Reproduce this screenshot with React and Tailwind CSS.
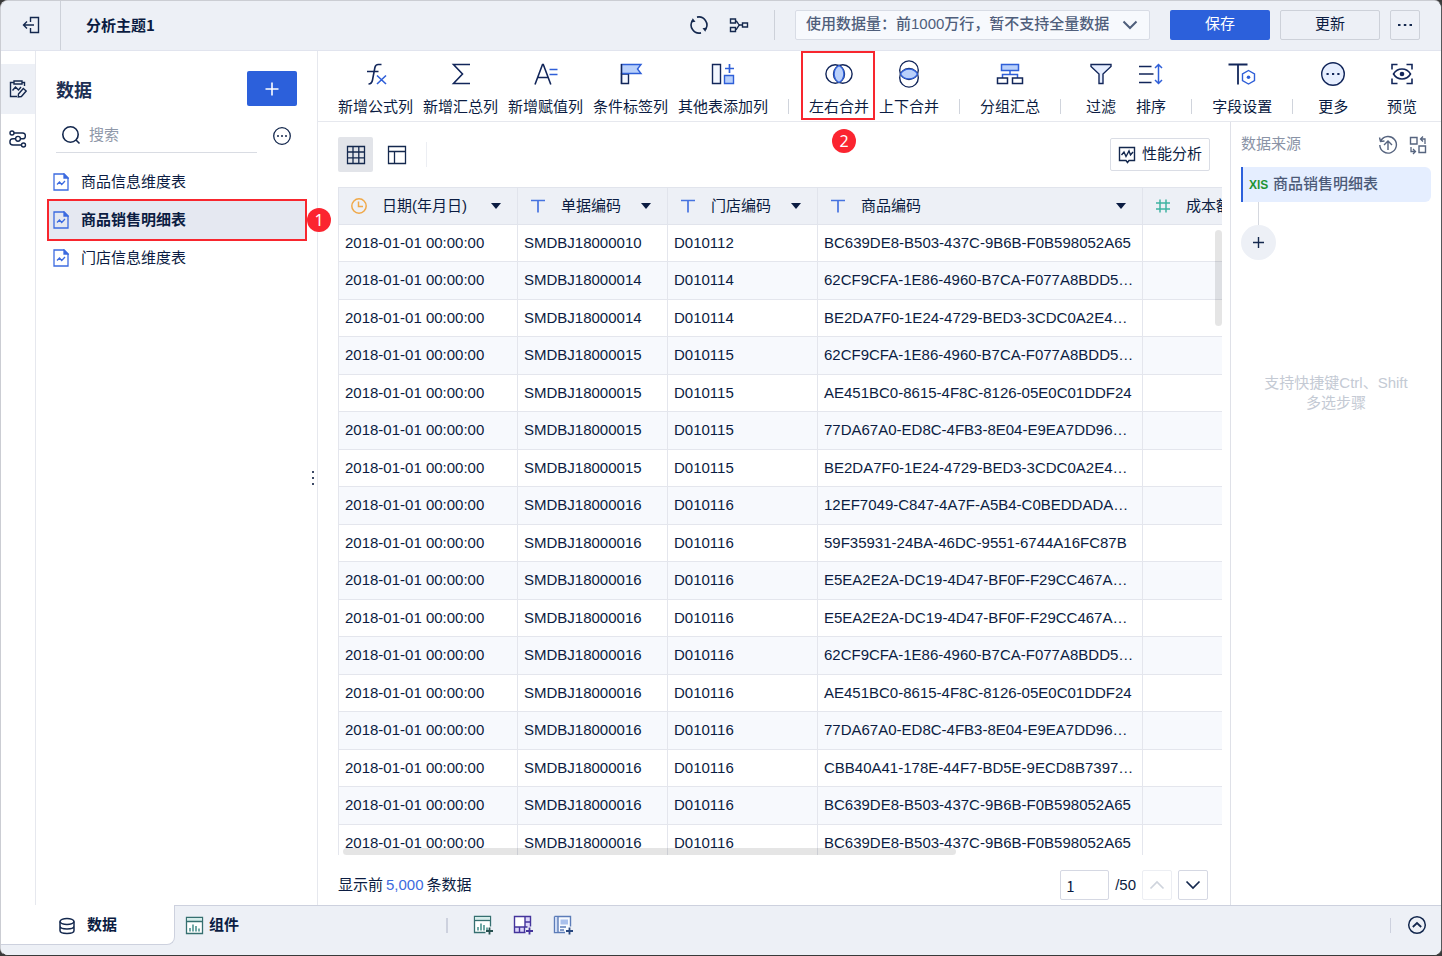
import React from "react";

const NAVY = "#12265a";
const BLUE = "#2f5fd8";
const INK = "#14284e";

function Svg({ w, h, children, className = "", stroke = INK, sw = 1.3 }) {
  return (
    <svg
      width={w}
      height={h}
      viewBox={`0 0 ${w} ${h}`}
      fill="none"
      stroke={stroke}
      strokeWidth={sw}
      className={`shrink-0 ${className}`}
      aria-hidden="true"
    >
      {children}
    </svg>
  );
}

const ExitIcon = () => (
  <Svg w={18} h={18} sw={1.4}>
    <path d="M8.500 6V1.500h8v15h-8V12M1.500 9H12M5 5.500L1.500 9 5 12.500" />
  </Svg>
);

const EditBoardIcon = () => (
  <Svg w={20} h={20} sw={1.4}>
    <path d="M16.500 7V3.500H14M6 3.500H2.500v14H9M6 2h8v3H6zM4.500 11.500l3-3.500 3 3 2.500-3" />
    <path d="M10.500 15l4.800-5.500 2.900 2.500-4.800 5.500-3.200.5z" />
  </Svg>
);

const FlowIcon = () => (
  <Svg w={20} h={20} sw={1.4}>
    <circle cx="4" cy="4" r="2" />
    <circle cx="10" cy="9.800" r="2.400" />
    <circle cx="15.500" cy="16" r="2" />
    <path d="M6 4h8.500a2.900 2.900 0 0 1 0 5.800H12.400M7.600 9.800H5a3.100 3.100 0 0 0 0 6.200h8.500" />
  </Svg>
);

const SearchIcon = () => (
  <Svg w={20} h={20} sw={1.6}>
    <circle cx="9.500" cy="9.500" r="7.700" />
    <path d="M15 15l3.500 3.500" />
  </Svg>
);

const DotsCircleIcon = () => (
  <Svg w={20} h={20} sw={1.3}>
    <circle cx="10" cy="10" r="8.300" />
    <path d="M5 10h2M9 10h2M13 10h2" strokeWidth="1.600" />
  </Svg>
);

const SheetIcon = () => (
  <Svg w={16} h={18} stroke="#3d6be0" sw={1.3}>
    <path d="M1 1h10l4 4v12H1z" />
    <path d="M11 1v4h4z" fill="#3d6be0" />
    <path d="M4 11.500l2.500-2.500 2.200 2.500 3.300-3.500" />
  </Svg>
);

const RefreshIcon = () => (
  <Svg w={20} h={20} sw={1.6}>
    <path d="M8 2.100A8.100 8.100 0 0 1 16.500 14.500M12 17.900A8.100 8.100 0 0 1 3.500 5.500" />
    <path d="M18 12.500l-4.500.8 2.800 3.500zM2 7.500l4.500-.8-2.800-3.500z" fill={INK} stroke="none" />
  </Svg>
);

const NodesIcon = () => (
  <Svg w={20} h={16} sw={1.4}>
    <path d="M1.500 2h5v4h-5zM1.500 10.500h5v4h-5zM13.500 6h5v4h-5z" />
    <path d="M6.500 4C9 4 8.500 8 11 8c-2.500 0-2 4.500-4.500 4.500M10 8h3.500" />
  </Svg>
);

const FxIcon = () => (
  <Svg w={28} h={28} stroke={NAVY} sw={1.6}>
    <path d="M19.500 4.500h-3.300c-2.200 0-2.900 1.200-3.300 3L10.500 20c-.5 2.700-1.400 4-4 4M5 11.500h11.500" />
    <path d="M15 15.500l9 8.500M24 15.500l-9 8.500" stroke={BLUE} />
  </Svg>
);

const SigmaIcon = () => (
  <Svg w={28} h={28} stroke={NAVY} sw={1.6}>
    <path d="M23 4.500H6.500l9 9.500-9 9.500H23" />
  </Svg>
);

const AssignIcon = () => (
  <Svg w={28} h={28} stroke={NAVY} sw={1.6}>
    <path d="M3 24.500l7.500-20h.8l7.500 20M5.500 17.500h11" />
    <path d="M17.500 9.500h8M17.500 14.500h8" stroke={BLUE} />
  </Svg>
);

const FlagIcon = () => (
  <Svg w={28} h={28} stroke={NAVY} sw={1.4}>
    <path d="M4.500 14h7v9.500h-7z" fill="#f3f7ff" />
    <path d="M4.500 4.500H24l-3.500 4.500 3.500 4.500H4.500z" fill="#b9d0fb" stroke={BLUE} />
    <path d="M4.500 4v20" />
  </Svg>
);

const AddColumnIcon = () => (
  <Svg w={28} h={28} stroke={NAVY} sw={1.4}>
    <path d="M3.500 4.500h8v19h-8z" fill="#f3f7ff" />
    <path d="M15.500 15.500h9v8h-9z" fill="#b9d0fb" stroke={BLUE} />
    <path d="M20.500 4v9M16 8.500h9" stroke={BLUE} strokeWidth="1.700" />
  </Svg>
);

const JoinIcon = () => (
  <Svg w={28} h={28} stroke={NAVY} sw={1.4}>
    <circle cx="10.200" cy="14" r="9.300" />
    <circle cx="17.800" cy="14" r="9.300" />
    <path d="M14 5.500a9.800 9.800 0 0 1 0 17a9.800 9.800 0 0 1 0-17z" fill="#b9d0fb" stroke={BLUE} />
  </Svg>
);

const UnionIcon = () => (
  <Svg w={28} h={28} stroke={NAVY} sw={1.4}>
    <circle cx="14" cy="10.200" r="9.300" />
    <circle cx="14" cy="17.800" r="9.300" />
    <path d="M5.500 14a9.800 9.800 0 0 1 17 0a9.800 9.800 0 0 1-17 0z" fill="#b9d0fb" stroke={BLUE} />
  </Svg>
);

const GroupIcon = () => (
  <Svg w={28} h={28} stroke={NAVY} sw={1.5}>
    <path d="M14 11v3.500M6.500 18v-3.500h15V18" stroke={BLUE} />
    <path d="M5.500 4.500h17v6h-17z" fill="#b9d0fb" stroke={BLUE} />
    <path d="M1.500 18h10v5.500h-10zM16.500 18h10v5.500h-10z" />
  </Svg>
);

const FilterIcon = () => (
  <Svg w={28} h={28} stroke={NAVY} sw={1.4}>
    <path d="M4 4.500h20v2L16 14v9.500h-4V14L4 6.500z" fill="#e6eeff" />
  </Svg>
);

const SortIcon = () => (
  <Svg w={28} h={28} stroke={NAVY} sw={1.7}>
    <path d="M2 6.500h12.500M2 14h14.500M2 22.500h12.500" />
    <path d="M21.500 4.500v19M18 8l3.500-3.500L25 8M18 20l3.500 3.500L25 20" stroke={BLUE} strokeWidth="1.500" />
  </Svg>
);

const FieldIcon = () => (
  <Svg w={28} h={28} stroke={NAVY} sw={1.8}>
    <path d="M.5 4.500h19M10 4.500v20" />
    <path d="M20.500 10.500l6 3.500v6.500l-6 3.500-6-3.500V14z" stroke={BLUE} fill="#fff" strokeWidth="1.400" />
    <circle cx="20.500" cy="17.200" r="1.800" fill={BLUE} stroke="none" />
  </Svg>
);

const MoreIcon = () => (
  <Svg w={28} h={28} stroke={NAVY} sw={1.4}>
    <circle cx="14" cy="14" r="11.300" fill="#e6eeff" />
    <path d="M7.500 14h2.200M13 14h2.200M18.300 14h2.200" strokeWidth="2" />
  </Svg>
);

const PreviewIcon = () => (
  <Svg w={28} h={28} stroke={NAVY} sw={1.6}>
    <path d="M4 9.500v-5h5.500M18.500 4.500H24v5M24 18.500v5h-5.500M9.500 23.500H4v-5" />
    <path d="M5.500 14c4-6.600 13-6.600 17 0c-4 6.600-13 6.600-17 0z" />
    <circle cx="14" cy="14" r="2.300" fill={NAVY} stroke="none" />
  </Svg>
);

const GridIcon = () => (
  <Svg w={20} h={20} sw={1.3}>
    <path d="M1.500 1.500h17v17h-17zM1.500 7h17M1.500 12.800h17M7 1.500v17M12.800 1.500v17" />
  </Svg>
);

const LayoutIcon = () => (
  <Svg w={20} h={20} sw={1.3}>
    <path d="M1.500 1.500h17v17h-17zM1.500 6.500h17M7.500 6.500v12" />
  </Svg>
);

const PerfIcon = () => (
  <Svg w={18} h={18} sw={1.4}>
    <path d="M8 14.500H1.500v-13h15v13H11l-1.500 2zM3.500 9L6 6l2 4.500L11 5l1.500 4L15 6" />
  </Svg>
);

const ClockIcon = () => (
  <Svg w={16} h={16} stroke="#f0a94a" sw={1.5}>
    <circle cx="8" cy="8" r="7.200" />
    <path d="M7.500 3.500v5H12" />
  </Svg>
);

const TextTypeIcon = () => (
  <Svg w={16} h={16} stroke="#4673e0" sw={1.7}>
    <path d="M1 2.500h14M8 2.500v12" />
  </Svg>
);

const HashIcon = () => (
  <Svg w={16} h={16} stroke="#3fb3a2" sw={1.5}>
    <path d="M1 5h14M1 11h14M5 1.500v13M11 1.500v13" />
  </Svg>
);

const RestoreIcon = () => (
  <Svg w={20} h={20} stroke="#56647f" sw={1.4}>
    <path d="M3 5.500a8.300 8.300 0 1 1-1.200 4.500M1.500 2.500l1 4 4-.5M10 15V6M6 10l4-4 4 4" />
  </Svg>
);

const SwapIcon = () => (
  <Svg w={20} h={20} stroke="#56647f" sw={1.4}>
    <path d="M2.500 2.500h6.500v6.500H2.500zM11 11h6.500v6.500H11z" />
    <path d="M17 9V4h-4.500M15 1.500L12.500 4 15 6.500M3 12v4.500h4.500M5 14l2.500 2.500L5 19" strokeWidth="1.300" />
  </Svg>
);

const DatabaseIcon = () => (
  <Svg w={16} h={18} sw={1.5}>
    <ellipse cx="8" cy="4.500" rx="7" ry="3" />
    <path d="M1 4.500v9c0 1.700 3 3 7 3s7-1.300 7-3v-9M1 9c0 1.700 3 3 7 3s7-1.300 7-3" />
  </Svg>
);

const ChartBoxIcon = ({ plus = false }) => (
  <Svg w={20} h={20} stroke="#356f70" sw={1.3}>
    <path d={plus ? "M12.500 17.500h-11v-16h16v10" : "M1.500 1.500h16v16h-16z"} fill="#fff" />
    <path d="M2 2h15v3H2z" fill="#d5ecea" stroke="none" />
    <path d="M1.500 5.500h16" />
    <path d="M5 15.500v-3.500M8 15.500V8.500M11 15.500v-5.500M14 15.500v-3" strokeWidth="1.600" stroke="#4e9390" />
    {plus && <path d="M16.500 12.500v7M13 16h7" strokeWidth="1.800" stroke="#27504f" />}
  </Svg>
);

const DashboardAddIcon = () => (
  <Svg w={20} h={20} stroke="#44349c" sw={1.4}>
    <path d="M2 2h10v10H2z" fill="#fff" stroke="none" />
    <path d="M12 2h5v10h-5zM2 12h10v5H2z" fill="#ddd6fa" stroke="none" />
    <path d="M12.500 17.500h-11v-16h16v10M1.500 12h13M12 1.500V12M12 7h5.500M6.500 12v5.500M11.500 12v5.500" />
    <path d="M16.500 12.500v7M13 16h7" strokeWidth="1.800" />
  </Svg>
);

const ReportAddIcon = () => (
  <Svg w={20} h={20} stroke="#5c7cb8" sw={1.4}>
    <path d="M2 2h15v15H2z" fill="#f7faff" stroke="none" />
    <path d="M1.500 1.500h16v10M12 17.500H1.500v-16" />
    <path d="M2 2h3v15H2z" fill="#cfdcf5" stroke="none" />
    <path d="M5 1.500v16" />
    <path d="M7.500 4.500h7.500v5H7.500z" fill="#a9c0ec" stroke="none" />
    <path d="M7 12h6M7 15h4" />
    <path d="M16.500 12.500v7M13 16h7" strokeWidth="1.800" stroke="#27477f" />
  </Svg>
);

const Chevron = ({ up = false, stroke = INK, sw = 1.7 }) => (
  <Svg w={16} h={16} stroke={stroke} sw={sw}>
    <path d={up ? "M1.500 11.500L8 5l6.500 6.500" : "M1.500 4.500L8 11l6.500-6.500"} />
  </Svg>
);

const UpCircleIcon = () => (
  <Svg w={20} h={20} sw={1.5}>
    <circle cx="10" cy="10" r="8.300" />
    <path d="M5.800 12L10 8l4.200 4" strokeWidth="1.800" />
  </Svg>
);

function Tool({ icon, label, marked }) {
  return (
    <button className="relative flex h-full min-w-[50px] flex-col items-center gap-1 px-[5px] pt-[9px] whitespace-nowrap">
      {icon}
      <span className="leading-[30px]">{label}</span>
      {marked && (
        <>
          <span className="absolute top-0 -right-px bottom-px -left-[3px] border-2 border-[#f8262e]" />
          <Badge className="top-[78px] left-7">2</Badge>
        </>
      )}
    </button>
  );
}

function Badge({ children, className }) {
  return (
    <span
      className={`absolute z-10 flex size-6 items-center justify-center rounded-full bg-[#fb2530] font-['Noto_Sans',sans-serif] text-base text-white ${className}`}
    >
      {children}
    </span>
  );
}

const ToolRule = () => <span className="mx-[15px] mt-12 h-[15px] w-px shrink-0 bg-[#d0d4dc]" />;

const tables = ["商品信息维度表", "商品销售明细表", "门店信息维度表"];

const columns = [
  { label: "日期(年月日)", icon: <ClockIcon />, width: "w-[180px]" },
  { label: "单据编码", icon: <TextTypeIcon />, width: "w-[150px]" },
  { label: "门店编码", icon: <TextTypeIcon />, width: "w-[150px]" },
  { label: "商品编码", icon: <TextTypeIcon />, width: "w-[325px]" },
  { label: "成本额", icon: <HashIcon />, width: "w-[150px]" },
];

const A = "BC639DE8-B503-437C-9B6B-F0B598052A65";
const B = "62CF9CFA-1E86-4960-B7CA-F077A8BDD5…";
const C = "BE2DA7F0-1E24-4729-BED3-3CDC0A2E4…";
const D = "AE451BC0-8615-4F8C-8126-05E0C01DDF24";
const E = "77DA67A0-ED8C-4FB3-8E04-E9EA7DD96…";
const F = "E5EA2E2A-DC19-4D47-BF0F-F29CC467A…";

const rows = [
  ["SMDBJ18000010", "D010112", A],
  ["SMDBJ18000014", "D010114", B],
  ["SMDBJ18000014", "D010114", C],
  ["SMDBJ18000015", "D010115", B],
  ["SMDBJ18000015", "D010115", D],
  ["SMDBJ18000015", "D010115", E],
  ["SMDBJ18000015", "D010115", C],
  ["SMDBJ18000016", "D010116", "12EF7049-C847-4A7F-A5B4-C0BEDDADA…"],
  ["SMDBJ18000016", "D010116", "59F35931-24BA-46DC-9551-6744A16FC87B"],
  ["SMDBJ18000016", "D010116", F],
  ["SMDBJ18000016", "D010116", F],
  ["SMDBJ18000016", "D010116", B],
  ["SMDBJ18000016", "D010116", D],
  ["SMDBJ18000016", "D010116", E],
  ["SMDBJ18000016", "D010116", "CBB40A41-178E-44F7-BD5E-9ECD8B7397…"],
  ["SMDBJ18000016", "D010116", A],
  ["SMDBJ18000016", "D010116", A],
];

function Header() {
  return (
    <header className="flex h-[50px] shrink-0 items-center border-b border-[#e1e4ee] bg-[#edf0f6] pr-[21px]">
      <button aria-label="退出" className="flex h-full w-[60px] items-center justify-center border-r border-[#cdd1d9] pb-0.5">
        <ExitIcon />
      </button>
      <h1 className="pl-[25px] font-['Noto_Sans_CJK_SC',sans-serif] font-bold">分析主题1</h1>
      <div className="ml-auto flex items-center pb-0.5">
        <button aria-label="刷新"><RefreshIcon /></button>
        <button aria-label="血缘" className="ml-5"><NodesIcon /></button>
        <span className="ml-[25px] h-[30px] w-px bg-[#cdd1d9]" />
        <div className="relative ml-5">
          <select
            aria-label="使用数据量"
            className="h-[30px] w-[355px] appearance-none rounded-xs border border-[#d8dce5] bg-[#f7f9fd] pl-[10px] font-medium text-[#4f5e7b]"
          >
            <option>使用数据量：前1000万行，暂不支持全量数据</option>
          </select>
          <span className="pointer-events-none absolute top-[7px] right-3"><Chevron stroke="#4f5e7b" sw={2} /></span>
        </div>
        <button className="ml-5 h-[30px] w-[100px] rounded-xs bg-[#2c60db] text-white">保存</button>
        <button className="ml-[10px] h-[30px] w-[100px] rounded-xs border border-[#cdd1d9]">更新</button>
        <button aria-label="更多操作" className="ml-[10px] flex size-[30px] items-center justify-center rounded-xs border border-[#cdd1d9]">
          <Svg w={16} h={4} sw={2}><path d="M1 2h2.500M6.800 2h2.500M12.500 2H15" /></Svg>
        </button>
      </div>
    </header>
  );
}

function Sidebar() {
  return (
    <aside className="relative flex w-[282px] shrink-0 flex-col border-r border-[#e6e8ee] pt-5">
      <div className="flex items-center justify-between pr-5 pl-5">
        <h2 className="font-['Noto_Sans_CJK_SC',sans-serif] text-lg font-bold text-[#1d3054]">数据</h2>
        <button aria-label="新增" className="flex h-[35px] w-[50px] items-center justify-center rounded-xs bg-[#2c60db]">
          <Svg w={14} h={14} stroke="#fff" sw={1.6}><path d="M7 .5v13M.5 7h13" /></Svg>
        </button>
      </div>
      <div className="mt-3 flex items-center pl-5">
        <label className="flex h-[35px] w-[201px] items-center gap-2 border-b border-[#d9dce3] pl-[5px]">
          <SearchIcon />
          <input aria-label="搜索" placeholder="搜索" className="w-full outline-none placeholder:text-[#8f98a9]" />
        </label>
        <button aria-label="更多" className="ml-[15px]"><DotsCircleIcon /></button>
      </div>
      <ul className="mt-[10px] mr-3 ml-[13px]">
        {tables.map((t, i) => (
          <li key={t} className="relative">
            <button className={`flex h-[38px] w-full items-center gap-3 pl-1 ${i === 1 ? "bg-[#e5e8f1] font-bold" : ""}`}>
              <SheetIcon />
              {t}
            </button>
            {i === 1 && (
              <>
                <span className="absolute -inset-0.5 border-2 border-[#f8262e]" />
                <Badge className="top-[7px] -right-[26px]">1</Badge>
              </>
            )}
          </li>
        ))}
      </ul>
      <span className="absolute top-1/2 right-[3px] flex -translate-y-1/2 flex-col gap-1">
        <i className="size-0.5 bg-[#3d4a66]" />
        <i className="size-0.5 bg-[#3d4a66]" />
        <i className="size-0.5 bg-[#3d4a66]" />
      </span>
    </aside>
  );
}

function DataTable() {
  return (
    <div className="relative min-h-0 flex-1 basis-0 overflow-hidden">
      <table className="w-[955px] table-fixed border-separate border-spacing-0">
        <thead>
          <tr className="h-[38px]">
            {columns.map((c, i) => (
              <th
                key={c.label}
                className={`border-t border-r border-b border-[#e1e4ec] bg-[#edf0f6] p-0 font-normal first:border-l ${c.width}`}
              >
                <div className="flex h-[35px] items-center pr-4 pl-3">
                  {c.icon}
                  <span className="ml-[15px]">{c.label}</span>
                  {i < 4 && (
                    <svg width="10" height="6" viewBox="0 0 10 6" className="ml-auto" aria-hidden="true">
                      <path d="M0 0h10L5 6z" fill="#0b1c42" />
                    </svg>
                  )}
                </div>
              </th>
            ))}
          </tr>
        </thead>
        <tbody>
          {rows.map((r, i) => (
            <tr key={i} className="h-[37px] even:h-[38px] even:bg-[#f7f9fd]">
              {["2018-01-01 00:00:00", ...r, ""].map((v, j) => (
                <td key={j} className="border-r border-b border-[#e4e6ed] py-0 pl-[6px] whitespace-nowrap first:border-l">
                  {v}
                </td>
              ))}
            </tr>
          ))}
        </tbody>
      </table>
      <span className="absolute top-[43px] right-0 h-24 w-[7px] rounded-full bg-black/10" />
      <span className="absolute bottom-0 left-[5px] h-[7px] w-[613px] rounded-full bg-black/10" />
    </div>
  );
}

function SourcePanel() {
  return (
    <aside className="flex w-[211px] shrink-0 flex-col border-l border-[#dfe1e8] pt-[10px] pr-[10px] pl-[10px]">
      <div className="flex h-[25px] items-center text-[#8a93a6]">
        数据来源
        <button aria-label="还原" className="ml-auto"><RestoreIcon /></button>
        <button aria-label="切换" className="mr-[3px] ml-[10px]"><SwapIcon /></button>
      </div>
      <button className="mt-[10px] flex h-[35px] items-center rounded-r-md border-l-2 border-[#2c60db] bg-[#e5eeff] pl-[6px] font-medium text-[#4c5a78]">
        <span className="w-6 shrink-0 text-left text-xs font-bold text-[#1f9434]">XlS</span>
        商品销售明细表
      </button>
      <div className="flex w-[35px] flex-col items-center">
        <span className="h-[23px] w-px bg-[#d5d8df]" />
        <button aria-label="添加步骤" className="flex size-[35px] items-center justify-center rounded-full bg-[#edf0f6]">
          <Svg w={11} h={11} sw={1.4}><path d="M5.500 0v11M0 5.500h11" /></Svg>
        </button>
      </div>
      <p className="mt-[113px] text-center leading-5 text-[#c4cad4]">
        支持快捷键Ctrl、Shift
        <br />
        多选步骤
      </p>
    </aside>
  );
}

function Footer() {
  return (
    <footer className="flex h-[50px] shrink-0 bg-[#edf0f6] font-bold">
      <button className="flex h-10 w-[174px] items-center gap-3 rounded-br-lg border-r border-b border-[#cdd1de] bg-white pt-0.5 pl-[58px]">
        <DatabaseIcon />
        数据
      </button>
      <div className="flex flex-1 items-start border-t border-[#cdd1de]">
        <button className="flex h-[39px] items-center gap-1 pl-[10px]">
          <ChartBoxIcon />
          组件
        </button>
        <div className="ml-[207px] flex h-[38px] items-center">
          <span className="h-[15px] w-0.5 bg-[#cdd1de]" />
          <button aria-label="添加组件" className="ml-[25px]"><ChartBoxIcon plus /></button>
          <button aria-label="添加仪表板" className="ml-5"><DashboardAddIcon /></button>
          <button aria-label="添加报告" className="ml-5"><ReportAddIcon /></button>
        </div>
        <div className="ml-auto flex h-[38px] items-center pr-[14px]">
          <span className="h-[15px] w-px bg-[#cdd1de]" />
          <button aria-label="展开" className="ml-4"><UpCircleIcon /></button>
        </div>
      </div>
    </footer>
  );
}

export default function App() {
  return (
    <div className="h-screen bg-[#3a3a3a] font-['Liberation_Sans','Noto_Sans_CJK_SC',sans-serif] text-[15px] text-[#0b1c42]">
      <div className="flex h-full flex-col overflow-hidden rounded-lg border border-t-[#cbcdd3] border-r-[#55575b] border-b-[#3a3a3a] border-l-[#cbcdd3] bg-white">
        <Header />
        <div className="flex min-h-0 flex-1">
          <nav className="flex w-[35px] shrink-0 flex-col border-r border-[#e6e8ee] pt-[13px]">
            <button aria-label="编辑" className="flex h-[50px] items-center justify-center bg-[#edf0f6]"><EditBoardIcon /></button>
            <button aria-label="流程" className="flex h-[50px] items-center justify-center"><FlowIcon /></button>
          </nav>
          <Sidebar />
          <main className="flex min-w-0 flex-1 flex-col">
            <div className="flex h-[71px] shrink-0 border-b border-[#e6e8ee] pr-[14px] pl-[15px]">
              <Tool icon={<FxIcon />} label="新增公式列" />
              <Tool icon={<SigmaIcon />} label="新增汇总列" />
              <Tool icon={<AssignIcon />} label="新增赋值列" />
              <Tool icon={<FlagIcon />} label="条件标签列" />
              <Tool icon={<AddColumnIcon />} label="其他表添加列" />
              <ToolRule />
              <Tool icon={<JoinIcon />} label="左右合并" marked />
              <Tool icon={<UnionIcon />} label="上下合并" />
              <ToolRule />
              <Tool icon={<GroupIcon />} label="分组汇总" />
              <ToolRule />
              <Tool icon={<FilterIcon />} label="过滤" />
              <Tool icon={<SortIcon />} label="排序" />
              <ToolRule />
              <Tool icon={<FieldIcon />} label="字段设置" />
              <ToolRule />
              <Tool icon={<MoreIcon />} label="更多" />
              <div className="ml-auto"><Tool icon={<PreviewIcon />} label="预览" /></div>
            </div>
            <div className="flex min-h-0 flex-1">
              <section className="flex min-w-0 flex-1 flex-col pr-2 pl-5">
                <div className="flex h-[65px] shrink-0 items-center pr-3">
                  <button aria-label="表格视图" className="flex size-[35px] items-center justify-center rounded-xs bg-[#e2e4e9]"><GridIcon /></button>
                  <button aria-label="列视图" className="ml-[14px]"><LayoutIcon /></button>
                  <span className="ml-[19px] h-[25px] w-px bg-[#eceef3]" />
                  <button className="ml-auto flex h-[33px] w-[100px] items-center justify-center gap-[6px] rounded-xs border border-[#dadde5] whitespace-nowrap">
                    <PerfIcon />
                    性能分析
                  </button>
                </div>
                <DataTable />
                <div className="flex h-[50px] shrink-0 items-end pr-[14px] pb-[5px]">
                  <p className="mr-auto leading-[30px]">
                    显示前<span className="mx-[3px] text-[#3d6be0]">5,000</span>条数据
                  </p>
                  <input
                    aria-label="页码"
                    defaultValue="1"
                    className="h-[30px] w-[49px] rounded-xs border border-[#d5d8e3] pl-[5px] font-['Noto_Sans_CJK_SC',sans-serif] outline-none"
                  />
                  <span className="mx-[6px] leading-[30px]">/50</span>
                  <button aria-label="上一页" className="flex size-[30px] items-center justify-center rounded-xs border border-[#eceef3]"><Chevron up stroke="#cfd4dd" /></button>
                  <button aria-label="下一页" className="ml-[6px] flex size-[30px] items-center justify-center rounded-xs border border-[#d5d8e3]"><Chevron /></button>
                </div>
              </section>
              <SourcePanel />
            </div>
          </main>
        </div>
        <Footer />
      </div>
    </div>
  );
}
